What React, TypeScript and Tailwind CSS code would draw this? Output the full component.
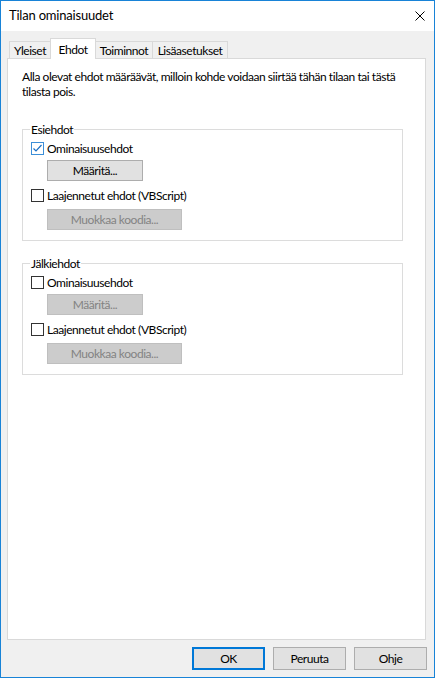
const font = { fontFamily: 'Lato, "Noto Sans", "Liberation Sans", sans-serif' };

const Checkbox = ({ checked }: { checked?: boolean }) => (
  <span
    className={`flex h-[13px] w-[13px] shrink-0 items-center justify-center border bg-white ${
      checked ? "border-[#3c8fd8]" : "border-[#333333]"
    }`}
  >
    {checked && (
      <svg width="11" height="11" viewBox="0 0 11 11">
        <path d="M1.5 5.5 L4 8 L9.5 2" fill="none" stroke="#1a6fc4" strokeWidth="1.2" />
      </svg>
    )}
  </span>
);

const CheckRow = ({ label, checked }: { label: string; checked?: boolean }) => (
  <div className="flex h-[15px] items-center ml-[8px]">
    <Checkbox checked={checked} />
    <span className="ml-[3px] leading-[15px]">{label}</span>
  </div>
);

const Button = ({ label, width, disabled }: { label: string; width: string; disabled?: boolean }) => (
  <div
    className={`ml-[24px] flex h-[21px] items-center justify-center border ${width} ${
      disabled ? "border-[#bfbfbf] bg-[#cccccc] text-[#838383]" : "border-[#adadad] bg-[#e1e1e1] text-black"
    }`}
  >
    {label}
  </div>
);

const Group = ({
  title,
  first,
  className,
}: {
  title: string;
  first?: boolean;
  className: string;
}) => (
  <div className={`mx-[14px] mr-[22px] border border-[#dcdcdc] pb-[10px] ${className}`}>
    <div className="-mt-[8px] ml-[7px] w-fit bg-white px-[1px] leading-[15px]">{title}</div>
    <div className="mt-[4px]">
      <CheckRow label="Ominaisuusehdot" checked={first} />
    </div>
    <div className="mt-[4px]">
      <Button label="Määritä..." width="w-[96px]" disabled={!first} />
    </div>
    <div className="mt-[7px]">
      <CheckRow label="Laajennetut ehdot (VBScript)" />
    </div>
    <div className="mt-[6px]">
      <Button label="Muokkaa koodia..." width="w-[135px]" disabled />
    </div>
  </div>
);

const tabs = ["Yleiset", "Ehdot", "Toiminnot", "Lisäasetukset"];
const tabWidths = ["w-[42px]", "w-[46px]", "w-[58px]", "w-[76px]"];

export default function App() {
  return (
    <div
      className="flex h-[678px] w-[435px] flex-col border border-[#1883d7] bg-[#f0f0f0] text-[12px] tracking-[-0.45px] text-black"
      style={font}
    >
      {/* title bar */}
      <div className="flex h-[30px] items-center justify-between bg-white pl-[8px] pr-[9px]">
        <span className="text-[13px] tracking-[-0.2px]">Tilan ominaisuudet</span>
        <svg width="10" height="10" viewBox="0 0 10 10">
          <path d="M0.5 0.5 L9.5 9.5 M9.5 0.5 L0.5 9.5" stroke="#000" strokeWidth="1" />
        </svg>
      </div>

      <div className="flex flex-1 flex-col pl-[6px] pr-[7px] pt-[7px]">
        {/* tabs */}
        <div className="relative z-10 flex h-[20px] items-end pl-[2px]">
          {tabs.map((t, i) =>
            i === 1 ? (
              <div
                key={t}
                className={`-mb-[1px] -ml-[1px] flex h-[21px] items-start justify-center border border-b-0 border-[#d9d9d9] bg-white pt-[2px] ${tabWidths[i]}`}
              >
                {t}
              </div>
            ) : (
              <div
                key={t}
                className={`flex h-[17px] items-center justify-center border border-b-0 border-[#d9d9d9] bg-[#f0f0f0] pt-[1px] ${
                  i > 0 ? "-ml-[1px]" : ""
                } ${tabWidths[i]}`}
              >
                {t}
              </div>
            )
          )}
        </div>

        {/* panel */}
        <div className="mr-[1px] flex-1 border border-[#d9d9d9] bg-white">
          <p className="whitespace-nowrap px-[14px] pt-[10px] leading-[15px]">
            Alla olevat ehdot määräävät, milloin kohde voidaan siirtää tähän tilaan tai tästä
            <br />
            tilasta pois.
          </p>
          <Group title="Esiehdot" first className="mt-[30px]" />
          <Group title="Jälkiehdot" className="mt-[22px]" />
        </div>

        {/* dialog buttons */}
        <div className="mb-[7px] mt-[7px] flex h-[23px] justify-end gap-[8px]">
          <div className="flex w-[73px] items-center justify-center border-2 border-[#0078d7] bg-[#e1e1e1]">
            OK
          </div>
          <div className="flex w-[73px] items-center justify-center border border-[#adadad] bg-[#e1e1e1]">
            Peruuta
          </div>
          <div className="flex w-[73px] items-center justify-center border border-[#adadad] bg-[#e1e1e1]">
            Ohje
          </div>
        </div>
      </div>
    </div>
  );
}
